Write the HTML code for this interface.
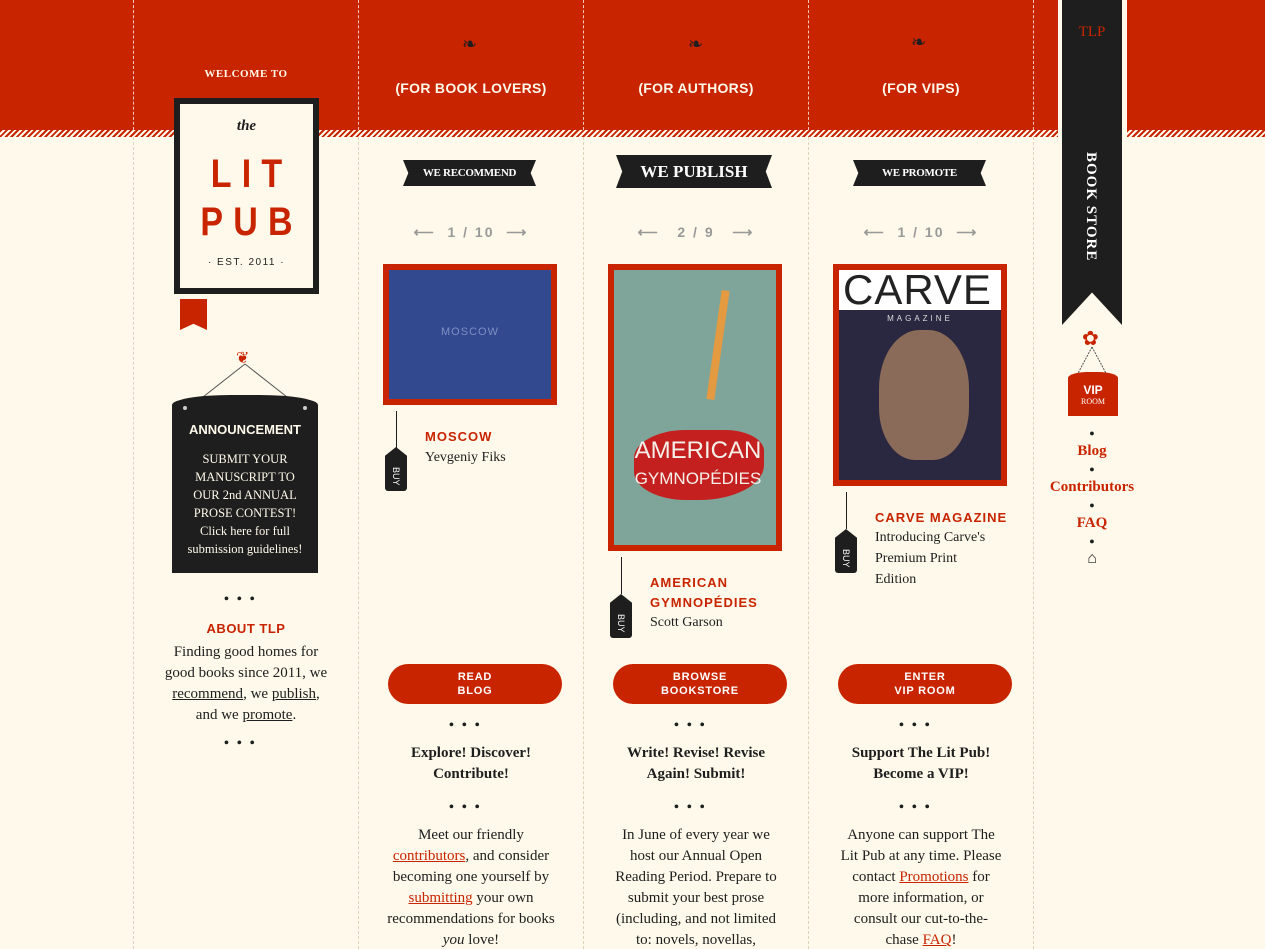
<!DOCTYPE html>
<html style="overflow:hidden"><head><meta charset="utf-8"><style>
*{margin:0;padding:0;box-sizing:border-box}
html,body{width:1265px;height:949px;overflow:hidden}
body{background:#fef9ea;font-family:"Liberation Serif",serif;color:#1e1e1e;position:relative}
.a{position:absolute}
.hdr{position:absolute;top:0;height:130px;background:#c82400}
.stripe{position:absolute;top:130px;height:7px;background:repeating-linear-gradient(135deg,#c82400 0 2px,#fef9ea 2px 4px)}
.vl{position:absolute;top:137px;height:812px;width:0;border-left:1px dashed #ddd3bd}
.vlh{position:absolute;top:0;height:130px;width:0;border-left:1px dashed #f4c8b8}
.c{text-align:center}
.sans{font-family:"Liberation Sans",sans-serif;font-weight:bold}
.hd{color:#fef9ea;font-size:14px;letter-spacing:.3px}
.rib{position:absolute;background:#1e1e1e;color:#fff;font-weight:bold;text-align:center;clip-path:polygon(0 0,100% 0,96% 50%,100% 100%,0 100%,4% 50%)}
.nav{color:#999;font-size:14px;letter-spacing:2px}
.btn{position:absolute;width:174px;height:40px;border-radius:20px;background:#c82400;color:#fff;font-size:11px;line-height:14px;padding-top:6px;letter-spacing:.8px}
.dots{position:absolute;font-size:14px;letter-spacing:8px;font-weight:bold}
.t{position:absolute;font-size:15px;line-height:21px;text-align:center}
.b{font-weight:bold}
.red{color:#c82400}
u{text-decoration:underline}
.tag{position:absolute;width:22px;height:44px;background:#1e1e1e;border-radius:3px;clip-path:polygon(50% 0,100% 20%,100% 100%,0 100%,0 20%);color:#fff;font-family:"Liberation Sans",sans-serif;font-size:9px}
.tag span{position:absolute;top:20px;transform:rotate(90deg);transform-origin:left top;left:16px}
.str{position:absolute;width:1px;background:#1e1e1e}
.ttl{position:absolute;font-family:"Liberation Sans",sans-serif;font-weight:bold;color:#c82400;font-size:13px;letter-spacing:1px;line-height:20px}
</style></head><body>
<div class="hdr" style="left:0;width:1058px"></div>
<div class="hdr" style="left:1127px;width:138px"></div>
<div class="stripe" style="left:0;width:1058px"></div>
<div class="stripe" style="left:1127px;width:138px"></div>
<div class="vl" style="left:133px"></div><div class="vl" style="left:358px"></div><div class="vl" style="left:583px"></div><div class="vl" style="left:808px"></div><div class="vl" style="left:1033px"></div>
<div class="vlh" style="left:133px"></div><div class="vlh" style="left:358px"></div><div class="vlh" style="left:583px"></div><div class="vlh" style="left:808px"></div><div class="vlh" style="left:1033px"></div>

<div class="a c b" style="left:134px;width:224px;top:68px;font-size:11px;color:#fef9ea;letter-spacing:.5px">WELCOME TO</div>
<div class="a" style="left:174px;top:98px;width:145px;height:196px;background:#fef9ea;border:6px solid #1e1e1e"></div>
<div class="a c b" style="left:174px;width:145px;top:118px;font-size:15px;font-style:italic">the</div>
<div class="a c" style="left:174px;width:145px;top:150px;font-family:'Liberation Sans',sans-serif;font-weight:bold;color:#c82400;font-size:40px;line-height:48px;letter-spacing:12px;padding-left:12px;transform:scaleX(.85)">LIT<br>PUB</div>
<div class="a c sans" style="left:174px;width:145px;top:257px;font-size:10px;letter-spacing:1.5px;font-weight:normal">· EST. 2011 ·</div>
<div class="a" style="left:180px;top:299px;width:27px;height:31px;background:#c82400;clip-path:polygon(0 0,100% 0,100% 100%,50% 80%,0 100%)"></div>
<div class="a red" style="left:236px;top:348px;font-size:16px">❦</div>
<svg class="a" style="left:170px;top:360px" width="150" height="40"><path d="M75 4 L33 37 M75 4 L117 37" stroke="#555" fill="none"/></svg>
<div class="a" style="left:172px;top:395px;width:146px;height:178px;background:#1e1e1e;border-radius:40% 40% 0 0/10px 10px 0 0"></div>
<div class="a" style="left:183px;top:406px;width:4px;height:4px;border-radius:50%;background:#ccc"></div><div class="a" style="left:303px;top:406px;width:4px;height:4px;border-radius:50%;background:#ccc"></div>
<div class="a c sans" style="left:172px;width:146px;top:422px;font-size:13px;color:#fef9ea">ANNOUNCEMENT</div>
<div class="a c" style="left:187px;width:116px;top:450px;font-size:12.5px;line-height:18px;color:#fef9ea">SUBMIT YOUR MANUSCRIPT TO OUR 2nd ANNUAL PROSE CONTEST! Click here for full submission guidelines!</div>
<div class="dots" style="left:224px;top:592px">•••</div>
<div class="a c sans red" style="left:134px;width:224px;top:621px;font-size:13px;letter-spacing:.5px">ABOUT TLP</div>
<div class="t" style="left:163px;width:166px;top:642px">Finding good homes for good books since 2011, we <u>recommend</u>, we <u>publish</u>, and we <u>promote</u>.</div>
<div class="dots" style="left:224px;top:736px">•••</div>

<div class="a" style="left:462px;top:34px;font-size:18px">❧</div>
<div class="a" style="left:688px;top:34px;font-size:18px">❧</div>
<div class="a" style="left:911px;top:32px;font-size:18px">❧</div>
<div class="a c sans hd" style="left:359px;width:224px;top:80px">(FOR BOOK LOVERS)</div>
<div class="a c sans hd" style="left:584px;width:224px;top:80px">(FOR AUTHORS)</div>
<div class="a c sans hd" style="left:809px;width:224px;top:80px">(FOR VIPS)</div>

<div class="rib" style="left:403px;top:160px;width:133px;height:26px;line-height:26px;font-size:11px;letter-spacing:-.3px">WE RECOMMEND</div>
<div class="rib" style="left:616px;top:155px;width:156px;height:33px;line-height:33px;font-size:17px">WE PUBLISH</div>
<div class="rib" style="left:853px;top:160px;width:133px;height:26px;line-height:26px;font-size:11px;letter-spacing:-.3px">WE PROMOTE</div>

<div class="a c sans nav" style="left:359px;width:224px;top:224px">⟵&nbsp; 1 / 10 &nbsp;⟶</div>
<div class="a c sans nav" style="left:584px;width:224px;top:224px">⟵&nbsp;&nbsp; 2 / 9 &nbsp;&nbsp;⟶</div>
<div class="a c sans nav" style="left:809px;width:224px;top:224px">⟵&nbsp; 1 / 10 &nbsp;⟶</div>

<div class="a" style="left:383px;top:264px;width:174px;height:141px;border:6px solid #c82400;background:#32488f;color:#7d8fc4;font-family:'Liberation Sans',sans-serif;font-size:11px;text-align:center;line-height:125px;letter-spacing:1px">MOSCOW</div>
<div class="a" style="left:608px;top:264px;width:174px;height:287px;border:6px solid #c82400;background:#7fa59a;overflow:hidden">
 <div class="a" style="left:20px;top:160px;width:130px;height:70px;background:#c42020;border-radius:40% 30% 50% 40%"></div>
 <div class="a" style="left:14px;top:168px;width:140px;color:#f4f0ea;font-size:24px;line-height:26px;text-align:center;font-family:'Liberation Sans',sans-serif">AMERICAN<br><span style="font-size:17px">GYMNOPÉDIES</span></div>
 <div class="a" style="left:100px;top:20px;width:8px;height:110px;background:#e39a40;transform:rotate(8deg)"></div>
</div>
<div class="a" style="left:833px;top:264px;width:174px;height:222px;border:6px solid #c82400;background:#2a2740;overflow:hidden">
 <div class="a" style="left:0;top:0;width:162px;height:40px;background:#fff"></div>
 <div class="a sans" style="left:4px;top:-4px;font-size:42px;color:#222;font-weight:normal;letter-spacing:1px">CARVE</div>
 <div class="a" style="left:0;top:44px;width:162px;text-align:center;color:#ddd;font-size:8px;letter-spacing:3px;font-family:'Liberation Sans',sans-serif">MAGAZINE</div>
 <div class="a" style="left:40px;top:60px;width:90px;height:130px;background:#8a6a58;border-radius:45% 45% 40% 40%"></div>
</div>

<div class="str" style="left:396px;top:411px;height:37px"></div><div class="tag" style="left:385px;top:447px"><span>BUY</span></div>
<div class="ttl" style="left:425px;top:427px">MOSCOW</div>
<div class="t" style="left:425px;top:447px;text-align:left;font-size:14px">Yevgeniy Fiks</div>
<div class="str" style="left:621px;top:557px;height:37px"></div><div class="tag" style="left:610px;top:594px"><span>BUY</span></div>
<div class="ttl" style="left:650px;top:573px">AMERICAN<br>GYMNOPÉDIES</div>
<div class="t" style="left:650px;top:612px;text-align:left;font-size:14px">Scott Garson</div>
<div class="str" style="left:846px;top:492px;height:37px"></div><div class="tag" style="left:835px;top:529px"><span>BUY</span></div>
<div class="ttl" style="left:875px;top:508px">CARVE MAGAZINE</div>
<div class="t" style="left:875px;top:527px;text-align:left;font-size:14px;width:115px">Introducing Carve's Premium Print Edition</div>

<div class="btn c sans" style="left:388px;top:664px">READ<br>BLOG</div>
<div class="btn c sans" style="left:613px;top:664px">BROWSE<br>BOOKSTORE</div>
<div class="btn c sans" style="left:838px;top:664px">ENTER<br>VIP ROOM</div>
<div class="dots" style="left:449px;top:718px">•••</div><div class="dots" style="left:674px;top:718px">•••</div><div class="dots" style="left:899px;top:718px">•••</div>
<div class="t b" style="left:396px;width:150px;top:743px">Explore! Discover! Contribute!</div>
<div class="t b" style="left:616px;width:160px;top:743px">Write! Revise! Revise Again! Submit!</div>
<div class="t b" style="left:836px;width:170px;top:743px">Support The Lit Pub! Become a VIP!</div>
<div class="dots" style="left:449px;top:800px">•••</div><div class="dots" style="left:674px;top:800px">•••</div><div class="dots" style="left:899px;top:800px">•••</div>
<div class="t" style="left:385px;width:172px;top:825px">Meet our friendly <u class="red">contributors</u>, and consider becoming one yourself by <u class="red">submitting</u> your own recommendations for books <i>you</i> love!</div>
<div class="t" style="left:612px;width:168px;top:825px">In June of every year we host our Annual Open Reading Period. Prepare to submit your best prose (including, and not limited to: novels, novellas,</div>
<div class="t" style="left:838px;width:166px;top:825px">Anyone can support The Lit Pub at any time. Please contact <u class="red">Promotions</u> for more information, or consult our cut-to-the-chase <u class="red">FAQ</u>!</div>

<div class="a" style="left:1062px;top:0;width:60px;height:325px;background:#1e1e1e;clip-path:polygon(0 0,100% 0,100% 100%,50% 90%,0 100%)"></div>
<div class="a c" style="left:1062px;width:60px;top:24px;color:#c82400;font-size:15px">TLP</div>
<div class="a b" style="left:1082px;top:152px;color:#fff;font-size:15px;letter-spacing:1px;writing-mode:vertical-rl">BOOK STORE</div>
<div class="a red" style="left:1082px;top:326px;font-size:20px">✿</div>
<svg class="a" style="left:1068px;top:345px" width="50" height="40"><path d="M24 2 L8 32 M24 2 L40 32" stroke="#555" stroke-dasharray="2 1" fill="none"/></svg>
<div class="a c" style="left:1068px;top:372px;width:50px;height:44px;background:#c82400;border-radius:40% 40% 0 0/6px 6px 0 0;color:#fff"><div class="sans" style="font-size:12px;margin-top:11px">VIP</div><div style="font-size:8px">ROOM</div></div>
<div class="a c b" style="left:1040px;width:104px;top:424px;font-size:15px;line-height:18px"><div style="font-size:9px">●</div><div class="red">Blog</div><div style="font-size:9px">●</div><div class="red">Contributors</div><div style="font-size:9px">●</div><div class="red">FAQ</div><div style="font-size:9px">●</div><div style="font-size:16px">⌂</div></div>
</body></html>
